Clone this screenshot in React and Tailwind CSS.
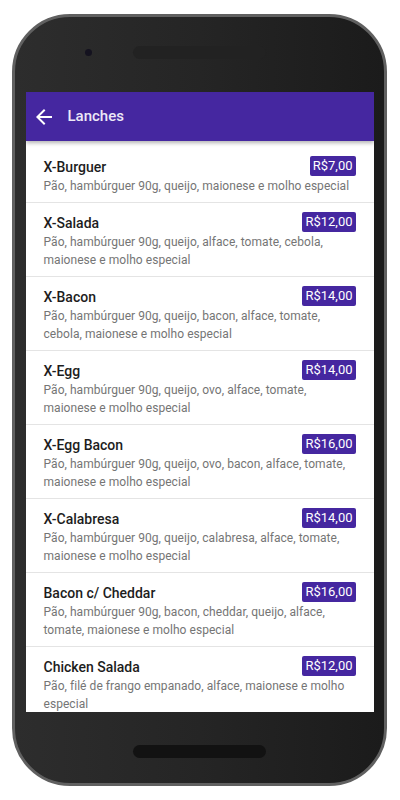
import React from 'react';

const items = [
  { name: 'X-Burguer', price: 'R$7,00', desc: 'Pão, hambúrguer 90g, queijo, maionese e molho especial' },
  { name: 'X-Salada', price: 'R$12,00', desc: 'Pão, hambúrguer 90g, queijo, alface, tomate, cebola, maionese e molho especial' },
  { name: 'X-Bacon', price: 'R$14,00', desc: 'Pão, hambúrguer 90g, queijo, bacon, alface, tomate, cebola, maionese e molho especial' },
  { name: 'X-Egg', price: 'R$14,00', desc: 'Pão, hambúrguer 90g, queijo, ovo, alface, tomate, maionese e molho especial' },
  { name: 'X-Egg Bacon', price: 'R$16,00', desc: 'Pão, hambúrguer 90g, queijo, ovo, bacon, alface, tomate, maionese e molho especial' },
  { name: 'X-Calabresa', price: 'R$14,00', desc: 'Pão, hambúrguer 90g, queijo, calabresa, alface, tomate, maionese e molho especial' },
  { name: 'Bacon c/ Cheddar', price: 'R$16,00', desc: 'Pão, hambúrguer 90g, bacon, cheddar, queijo, alface, tomate, maionese e molho especial' },
  { name: 'Chicken Salada', price: 'R$12,00', desc: 'Pão, filé de frango empanado, alface, maionese e molho especial' },
];

const App = () => {
  return (
    <div className="min-h-screen bg-white pl-[12px] pt-[14px]" style={{ fontFamily: 'Roboto, "Noto Sans", sans-serif' }}>
      <div className="w-[375px] h-[772px] rounded-[58px] border-[3px] border-[#606060] bg-gradient-to-r from-[#2d2d2d] via-[#252525] to-[#1b1b1b] flex flex-col items-center">
        {/* top bezel */}
        <div className="relative w-full h-[75px] flex justify-center pt-[29px]">
          <div className="absolute left-[70px] top-[32px] w-[7px] h-[7px] rounded-full bg-[#14121f]" />
          <div className="w-[133px] h-[13px] rounded-full bg-[#222222]" />
        </div>

        {/* screen */}
        <div className="w-[348px] h-[620px] overflow-hidden bg-white flex flex-col">
          <div className="h-[49px] bg-[#4527a0] flex items-center shrink-0 shadow-[0_2px_4px_rgba(0,0,0,0.3)] relative z-10">
            <svg width="24" height="24" viewBox="0 0 24 24" className="ml-[6px]" fill="white">
              <path d="M20 11H7.83l5.59-5.59L12 4l-8 8 8 8 1.41-1.41L7.83 13H20v-2z" />
            </svg>
            <span className="ml-[12px] text-[15px] font-medium text-[#ece8f7]">Lanches</span>
          </div>

          <div className="pt-[6px]">
            {items.map((item) => (
              <div key={item.name} className="px-[18px] pt-[10px] pb-[6px] border-b border-[#e4e4e4]">
                <div className="flex justify-between items-start">
                  <span className="text-[14px] leading-5 font-medium text-[#1d1d1d]">{item.name}</span>
                  <span className="mt-[-1px] rounded-[2px] bg-[#4527a0] px-[3px] text-[13px] leading-5 text-white">{item.price}</span>
                </div>
                <p className="text-[12px] tracking-[0.05px] leading-[18.5px] text-[#757575]">{item.desc}</p>
              </div>
            ))}
          </div>
        </div>

        {/* bottom bezel */}
        <div className="w-full flex-1 flex justify-center pt-[33px]">
          <div className="w-[133px] h-[13px] rounded-full bg-[#121212]" />
        </div>
      </div>
    </div>
  );
};

export default App;
